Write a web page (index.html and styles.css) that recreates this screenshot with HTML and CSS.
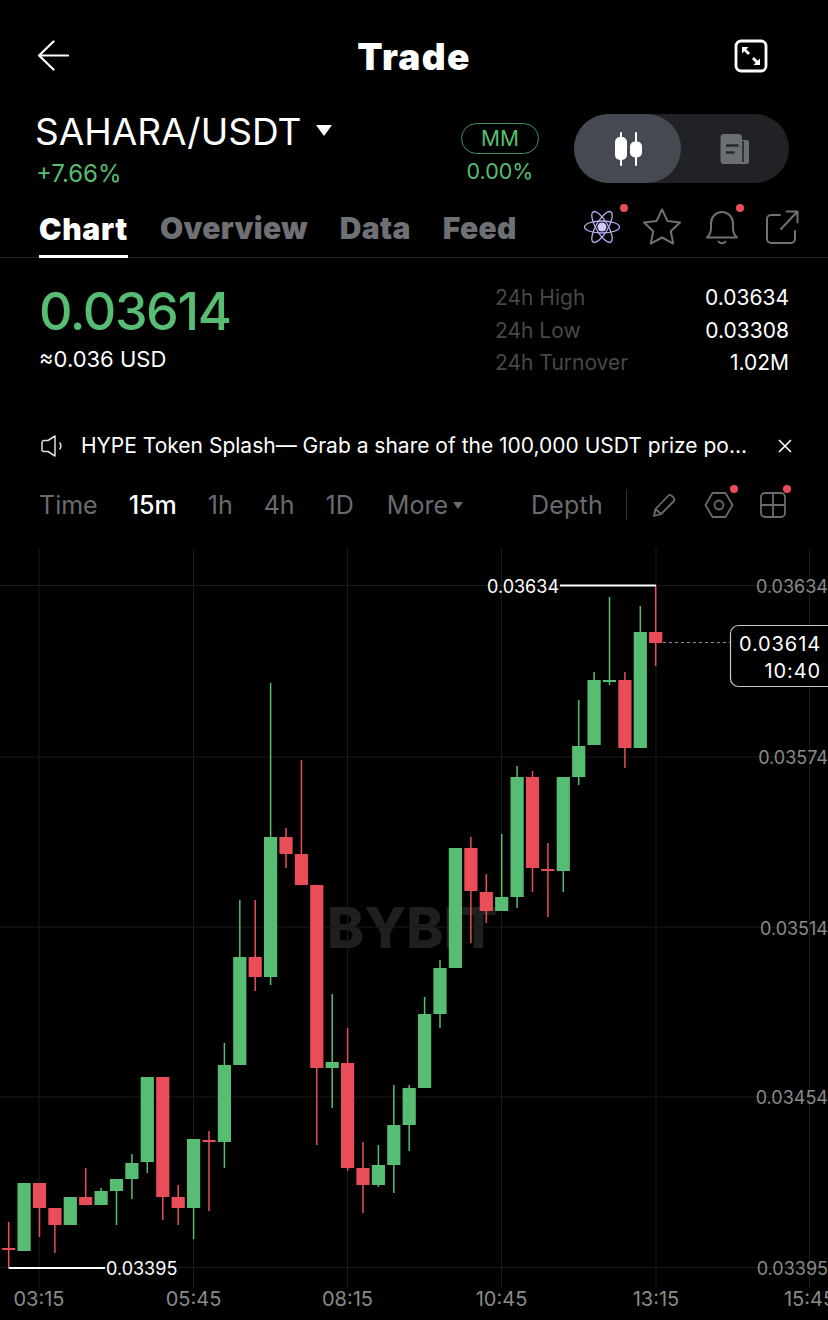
FILE: index.html
```html
<!DOCTYPE html>
<html lang="en">
<head>
<meta charset="UTF-8">
<meta name="viewport" content="width=device-width, initial-scale=1.0">
<title>Trade</title>
<link rel="stylesheet" href="styles.css">
</head>
<body>
<!-- Top bar -->
<header class="topbar">
  <svg class="icon-back" width="32" height="32" viewBox="0 0 32 32"><path d="M31 15.500H2M16.500 1.500 2 15.500 16.500 29.500"/></svg>
  <h1>Trade</h1>
  <svg class="icon-expand" width="34" height="34" viewBox="0 0 34 34">
    <rect x="2" y="2" width="30" height="30" rx="5"/>
    <path d="M8 8h6.500l-2.200 2.200 3.700 3.700-2 2-3.700-3.700L8 14.500zM26 26h-6.500l2.200-2.200-3.700-3.700 2-2 3.700 3.700 2.300-2.300z"/>
  </svg>
</header>

<!-- Pair row -->
<section class="pair-row">
  <div class="pair-info">
    <div class="pair-name">SAHARA/USDT <span class="caret"></span></div>
    <div class="pair-change">+7.66%</div>
  </div>
  <div class="mm-box">
    <div class="mm-badge">MM</div>
    <div class="mm-value">0.00%</div>
  </div>
  <div class="toggle">
    <div class="toggle-on">
      <svg width="36" height="36" viewBox="0 0 36 36">
        <rect x="10" y="1" width="2" height="34" rx="1"/>
        <rect x="5" y="6" width="12" height="23" rx="5"/>
        <rect x="25" y="1" width="2" height="34" rx="1"/>
        <rect x="20" y="10.500" width="12" height="16" rx="5"/>
      </svg>
    </div>
    <div class="toggle-off">
      <svg width="32" height="32" viewBox="0 0 32 32">
        <path class="news-back" d="M20 7h8a2 2 0 0 1 2 2v20a2 2 0 0 1-2 2H16z"/>
        <rect class="news-page" x="1.500" y="1" width="21.500" height="30" rx="3.500"/>
        <path class="news-gap" d="M24 8v21"/>
        <path class="news-lines" d="M7 12.500h12.500M7 19.500h8.500"/>
      </svg>
    </div>
  </div>
</section>

<!-- Tabs -->
<nav class="tabs">
  <a class="tab active">Chart</a>
  <a class="tab">Overview</a>
  <a class="tab">Data</a>
  <a class="tab">Feed</a>
  <div class="tab-icons">
    <span class="tab-icon">
      <svg width="38" height="38" viewBox="0 0 38 38">
        <g class="atom">
          <ellipse cx="19" cy="19" rx="17.500" ry="6"/>
          <ellipse cx="19" cy="19" rx="17.500" ry="6" transform="rotate(60 19 19)"/>
          <ellipse cx="19" cy="19" rx="17.500" ry="6" transform="rotate(120 19 19)"/>
        </g>
        <circle class="atom-core" cx="19" cy="19" r="4.500"/>
      </svg>
      <i class="dot dot-atom"></i>
    </span>
    <span class="tab-icon">
      <svg width="38" height="38" viewBox="0 0 38 38"><path class="line-icon" d="M19 1.500l5.400 11.400 12.600 1.600-9.200 8.700 2.400 12.400L19 29.500 7.800 35.600l2.400-12.400L1 14.500l12.600-1.600z"/></svg>
    </span>
    <span class="tab-icon">
      <svg width="38" height="38" viewBox="0 0 38 38"><path class="line-icon" d="M4 29.500h30c-3-2.500-4-5-4-9.500v-4.500C30 9 25 4 19 4S8 9 8 15.500V20c0 4.500-1 7-4 9.500zM15.500 33.500c1.500 2.300 5.500 2.300 7 0"/></svg>
      <i class="dot dot-bell"></i>
    </span>
    <span class="tab-icon">
      <svg width="38" height="38" viewBox="0 0 38 38"><path class="line-icon" d="M17 7H8a4 4 0 0 0-4 4v20a4 4 0 0 0 4 4h20a4 4 0 0 0 4-4v-8M18 21L34 4M23.500 3.500H34.500V14.500"/></svg>
    </span>
  </div>
</nav>

<!-- Price + 24h stats -->
<section class="stats">
  <div class="price-box">
    <div class="price">0.03614</div>
    <div class="price-usd">&asymp;0.036 USD</div>
  </div>
  <dl class="stat-list">
    <div class="stat"><dt>24h High</dt><dd>0.03634</dd></div>
    <div class="stat"><dt>24h Low</dt><dd>0.03308</dd></div>
    <div class="stat"><dt>24h Turnover</dt><dd>1.02M</dd></div>
  </dl>
</section>

<!-- Announcement -->
<section class="notice">
  <svg class="icon-speaker" width="24" height="24" viewBox="0 0 24 24"><path d="M2 8.500a2 2 0 0 1 2-2h4L15 2v20l-7-4.500H4a2 2 0 0 1-2-2zM20 9c1.200 2 1.200 4 0 6"/></svg>
  <span class="notice-text">HYPE Token Splash— Grab a share of the 100,000 USDT prize po...</span>
  <svg class="icon-close" width="14" height="14" viewBox="0 0 14 14"><path d="M1 1l12 12M13 1L1 13"/></svg>
</section>

<!-- Chart toolbar -->
<section class="toolbar">
  <span class="tf tf-time">Time</span>
  <span class="tf tf-active">15m</span>
  <span class="tf">1h</span>
  <span class="tf">4h</span>
  <span class="tf">1D</span>
  <span class="tf tf-more">More<i class="more-caret"></i></span>
  <span class="tf tf-depth">Depth</span>
  <i class="tool-sep"></i>
  <span class="tool">
    <svg width="28" height="28" viewBox="0 0 28 28"><path class="line-icon thin" d="M3 25l1.500-7L17.500 4.500c2-2 7.500 3 5.500 5.500L10 23zM4.500 18l5.500 5"/></svg>
  </span>
  <span class="tool">
    <svg width="30" height="28" viewBox="0 0 30 28"><path class="line-icon thin" d="M8.500 2h13L28.500 14l-7 12h-13L1.500 14z"/><circle class="line-icon thin" cx="15" cy="14" r="4.500"/></svg>
    <i class="dot dot-tool"></i>
  </span>
  <span class="tool">
    <svg width="28" height="28" viewBox="0 0 28 28"><rect class="line-icon thin" x="2" y="2" width="24" height="24" rx="4"/><path class="line-icon thin" d="M14 2v24M2 14h24"/></svg>
    <i class="dot dot-tool"></i>
  </span>
</section>

<!-- Kline chart, drawn in page coordinates -->
<svg class="chart" width="828" height="772" viewBox="0 548 828 772">
  <text class="watermark" x="327" y="948">BYBIT</text>

  <path class="grid" d="M0 585.500H828M0 757H828M0 927H828M0 1097H828M0 1267.500H828M39 548V1288M193.500 548V1288M347.500 548V1288M501.500 548V1288M656 548V1288M809.500 548V1288"/>

  <path class="wick-up" d="M101.100 1188V1191M116.500 1191V1225M131.900 1154V1199M147.300 1162V1173M193.600 1208V1239M224.400 1043V1168M239.800 900V957M270.600 683V985M332.200 994V1108M378.400 1145V1187M393.800 1085V1193M409.200 1085V1151M424.600 997V1014M440 960V1028M501.700 834V897M517.100 766V908M563.300 871V892M578.700 700V785M594.100 672V680M609.500 597V685M640.300 606V632"/>
  <path class="wick-down" d="M8.700 1222V1268M39.500 1208V1237M54.900 1225V1253M85.700 1168V1197M162.800 1197V1220M178.200 1185V1225M209 1131V1211M255.200 900V991M286 828V868M301.400 760V854M316.800 1068V1145M347.600 1028V1171M363 1142V1213M470.900 837V943M486.300 874V923M532.500 771V892M547.900 843V917M624.900 672V768M655.700 585.500V666"/>

  <g class="up">
    <rect x="17.500" y="1183" width="13.200" height="68"/>
    <rect x="63.700" y="1197" width="13.200" height="28"/>
    <rect x="94.500" y="1191" width="13.200" height="14"/>
    <rect x="109.900" y="1179" width="13.200" height="12"/>
    <rect x="125.300" y="1163" width="13.200" height="16"/>
    <rect x="140.700" y="1077" width="13.200" height="85"/>
    <rect x="187" y="1139" width="13.200" height="69"/>
    <rect x="217.800" y="1065" width="13.200" height="77"/>
    <rect x="233.200" y="957" width="13.200" height="108"/>
    <rect x="264" y="837" width="13.200" height="140"/>
    <rect x="325.600" y="1062" width="13.200" height="6"/>
    <rect x="371.800" y="1165" width="13.200" height="20"/>
    <rect x="387.200" y="1125" width="13.200" height="40"/>
    <rect x="402.600" y="1088" width="13.200" height="37"/>
    <rect x="418" y="1014" width="13.200" height="74"/>
    <rect x="433.400" y="968" width="13.200" height="46"/>
    <rect x="448.800" y="848" width="13.200" height="120"/>
    <rect x="495.100" y="897" width="13.200" height="14"/>
    <rect x="510.500" y="777" width="13.200" height="120"/>
    <rect x="556.700" y="777" width="13.200" height="94"/>
    <rect x="572.100" y="746" width="13.200" height="31"/>
    <rect x="587.500" y="680" width="13.200" height="65"/>
    <rect x="602.900" y="680" width="13.200" height="2"/>
    <rect x="633.700" y="632" width="13.200" height="116"/>
  </g>
  <g class="down">
    <rect x="2.100" y="1248" width="13.200" height="2"/>
    <rect x="32.900" y="1183" width="13.200" height="25"/>
    <rect x="48.300" y="1208" width="13.200" height="17"/>
    <rect x="79.100" y="1197" width="13.200" height="8"/>
    <rect x="156.200" y="1077" width="13.200" height="120"/>
    <rect x="171.600" y="1197" width="13.200" height="11"/>
    <rect x="202.400" y="1140" width="13.200" height="2"/>
    <rect x="248.600" y="957" width="13.200" height="20"/>
    <rect x="279.400" y="837" width="13.200" height="17"/>
    <rect x="294.800" y="854" width="13.200" height="31"/>
    <rect x="310.200" y="885" width="13.200" height="183"/>
    <rect x="341" y="1063" width="13.200" height="105"/>
    <rect x="356.400" y="1168" width="13.200" height="17"/>
    <rect x="464.300" y="848" width="13.200" height="43"/>
    <rect x="479.700" y="892" width="13.200" height="19"/>
    <rect x="525.900" y="777" width="13.200" height="91"/>
    <rect x="541.300" y="869" width="13.200" height="2"/>
    <rect x="618.300" y="680" width="13.200" height="68"/>
    <rect x="649.100" y="632" width="13.200" height="11"/>
  </g>

  <!-- high / low markers -->
  <path class="marker" d="M560 585.500H656M8.700 1268H105"/>
  <text class="marker-text" x="487" y="593">0.03634</text>
  <text class="marker-text" x="106" y="1275">0.03395</text>

  <!-- last price -->
  <path class="last-line" d="M663 642.500H730"/>
  <rect class="last-tag" x="730.500" y="625.500" width="110" height="61" rx="8"/>
  <text class="last-text" x="821" y="651">0.03614</text>
  <text class="last-text" x="821" y="678">10:40</text>

  <!-- price axis -->
  <text class="axis-y" x="828" y="593">0.03634</text>
  <text class="axis-y" x="828" y="764">0.03574</text>
  <text class="axis-y" x="828" y="935">0.03514</text>
  <text class="axis-y" x="828" y="1104">0.03454</text>
  <text class="axis-y" x="828" y="1275">0.03395</text>

  <!-- time axis -->
  <text class="axis-x" x="39" y="1306">03:15</text>
  <text class="axis-x" x="193.500" y="1306">05:45</text>
  <text class="axis-x" x="347.500" y="1306">08:15</text>
  <text class="axis-x" x="501.500" y="1306">10:45</text>
  <text class="axis-x" x="656" y="1306">13:15</text>
  <text class="axis-x" x="809.500" y="1306">15:45</text>
</svg>
</body>
</html>
```

FILE: styles.css
```css
/* Page */
html, body {
  margin: 0;
  padding: 0;
  background: #000;
}
body {
  width: 828px;
  height: 1320px;
  overflow: hidden;
  color: #fff;
  font-family: Inter, "Noto Sans", sans-serif;
}

/* Top bar */
.topbar {
  display: grid;
  grid-template-columns: 1fr auto 1fr;
  align-items: center;
  height: 112px;
  padding: 0 37px;
}
.topbar h1 {
  margin: 0;
  font-size: 37px;
  font-weight: 900;
  letter-spacing: 1.300px;
  line-height: 1;
}
.icon-expand {
  justify-self: end;
  margin-right: 23px;
}
.icon-back path {
  fill: none;
  stroke: #fff;
  stroke-width: 2.200;
  stroke-linecap: round;
  stroke-linejoin: round;
}
.icon-expand rect {
  fill: none;
  stroke: #fff;
  stroke-width: 2.800;
}
.icon-expand path {
  fill: #fff;
}

/* Pair row */
.pair-row {
  display: flex;
  align-items: flex-start;
  height: 93px;
  padding-left: 35px;
}
.pair-name {
  display: flex;
  align-items: center;
  gap: 15px;
  font-size: 37px;
  line-height: 40px;
}
.caret {
  width: 0;
  height: 0;
  border-left: 8px solid transparent;
  border-right: 8px solid transparent;
  border-top: 11px solid #fff;
  margin-bottom: 4px;
}
.pair-change {
  margin-top: 7px;
  padding-left: 1px;
  font-size: 24px;
  line-height: 30px;
  color: #56bd72;
}
.mm-box {
  margin-left: auto;
  width: 78px;
  padding-top: 11px;
  text-align: center;
}
.mm-badge {
  height: 29px;
  line-height: 29px;
  border: 1px solid #3d9256;
  border-radius: 16px;
  font-size: 21px;
  color: #56bd72;
}
.mm-value {
  font-size: 21.500px;
  line-height: 34px;
  color: #56bd72;
}
.toggle {
  display: flex;
  width: 215px;
  height: 69px;
  margin: 2px 39px 0 35px;
  background: #202226;
  border-radius: 35px;
}
.toggle-on, .toggle-off {
  display: flex;
  align-items: center;
  justify-content: center;
}
.toggle-on {
  width: 107px;
  background: #454a52;
  border-radius: 35px;
}
.toggle-on rect {
  fill: #fff;
}
.toggle-off {
  width: 108px;
}
.news-back { fill: #6b6e73; }
.news-page { fill: #6b6e73; }
.news-gap {
  stroke: #202226;
  stroke-width: 1.500;
}
.news-lines {
  fill: none;
  stroke: #26282c;
  stroke-width: 2.500;
}

/* Tabs */
.tabs {
  display: flex;
  align-items: flex-end;
  gap: 32px;
  height: 52px;
  padding-left: 39px;
  border-bottom: 1px solid #1e1e1e;
}
.tab {
  height: 45px;
  font-size: 30px;
  font-weight: 900;
  letter-spacing: .3px;
  line-height: 32px;
  color: #6f7074;
}
.tab.active {
  width: 89px;
  color: #fff;
  letter-spacing: .7px;
  box-sizing: border-box;
  border-bottom: 3px solid #fff;
  margin-bottom: -1px;
}
.tab-icons {
  display: flex;
  gap: 22px;
  margin-left: auto;
  padding: 0 27px 11px 0;
}
.tab-icon {
  position: relative;
  display: block;
  width: 38px;
  height: 38px;
}
.line-icon {
  fill: none;
  stroke: #707175;
  stroke-width: 2;
  stroke-linejoin: round;
  stroke-linecap: round;
}
.line-icon.thin {
  stroke: #6a6b6e;
  stroke-width: 1.800;
}
.atom ellipse {
  fill: none;
  stroke: #b9aef5;
  stroke-width: 1.300;
}
.atom-core {
  fill: #cfc8fb;
}
.dot {
  position: absolute;
  width: 8px;
  height: 8px;
  border-radius: 50%;
  background: #e94d57;
}
.dot-atom { top: -4px; right: -7px; }
.dot-bell { top: -4px; right: -3px; }

/* Price + 24h stats */
.stats {
  display: flex;
  justify-content: space-between;
  height: 162px;
  padding: 22px 39px 0 39px;
  box-sizing: border-box;
}
.price {
  font-size: 52px;
  font-weight: 500;
  letter-spacing: -1.400px;
  line-height: 64px;
  color: #56bd72;
}
.price-usd {
  font-size: 22px;
  line-height: 30px;
}
.stat-list {
  width: 294px;
  margin: 2px 0 0;
}
.stat {
  display: flex;
  justify-content: space-between;
  height: 32.500px;
  line-height: 32.500px;
  font-size: 21px;
}
.stat dt {
  color: #47484a;
}
.stat dd {
  margin: 0;
}

/* Announcement */
.notice {
  display: flex;
  align-items: center;
  height: 52px;
  padding-left: 40px;
}
.icon-speaker path {
  fill: none;
  stroke: #ddd;
  stroke-width: 1.500;
  stroke-linejoin: round;
  stroke-linecap: round;
}
.notice-text {
  width: 697px;
  margin: 0 0 2px 17px;
  font-size: 21px;
  white-space: nowrap;
}
.icon-close path {
  fill: none;
  stroke: #fff;
  stroke-width: 1.600;
}

/* Chart toolbar */
.toolbar {
  display: flex;
  align-items: center;
  height: 76px;
  padding: 0 0 10px 39px;
  box-sizing: border-box;
}
.tf {
  margin-right: 31px;
  font-size: 25px;
  color: #6a6b6e;
}
.tf-active {
  color: #fff;
  font-weight: 500;
}
.tf-more {
  display: flex;
  align-items: center;
  margin: 0 0 0 2px;
}
.more-caret {
  width: 0;
  height: 0;
  margin-left: 5px;
  border-left: 5px solid transparent;
  border-right: 5px solid transparent;
  border-top: 7px solid #6a6b6e;
}
.tf-depth {
  margin: 0 0 0 68px;
  letter-spacing: .2px;
}
.tool-sep {
  width: 1px;
  height: 30px;
  margin: 0 24px 0 23px;
  background: #333;
}
.tool {
  position: relative;
  display: block;
  height: 28px;
  margin-right: 25px;
}
.dot-tool {
  top: -6px;
  right: -4px;
}

/* Chart */
.chart {
  display: block;
}
.watermark {
  font-size: 56px;
  font-weight: 800;
  fill: #1f1f1f;
}
.grid {
  fill: none;
  stroke: #1b1b1b;
  stroke-width: 1;
}
.wick-up, .wick-down {
  fill: none;
  stroke-width: 1.500;
}
.wick-up { stroke: #56bd72; }
.wick-down { stroke: #e94d57; }
.up { fill: #56bd72; }
.down { fill: #e94d57; }
.marker {
  fill: none;
  stroke: #fff;
  stroke-width: 1.800;
}
.marker-text {
  font-size: 18px;
  fill: #fff;
}
.last-line {
  fill: none;
  stroke: #8c8c8c;
  stroke-dasharray: 3 3;
}
.last-tag {
  fill: #000;
  stroke: #c8c8c8;
  stroke-width: 1.200;
}
.last-text {
  font-size: 20px;
  letter-spacing: .9px;
  fill: #fff;
  text-anchor: end;
}
.axis-y {
  font-size: 18px;
  fill: #8a8a8a;
  text-anchor: end;
}
.axis-x {
  font-size: 20px;
  fill: #8a8a8a;
  text-anchor: middle;
}
```
